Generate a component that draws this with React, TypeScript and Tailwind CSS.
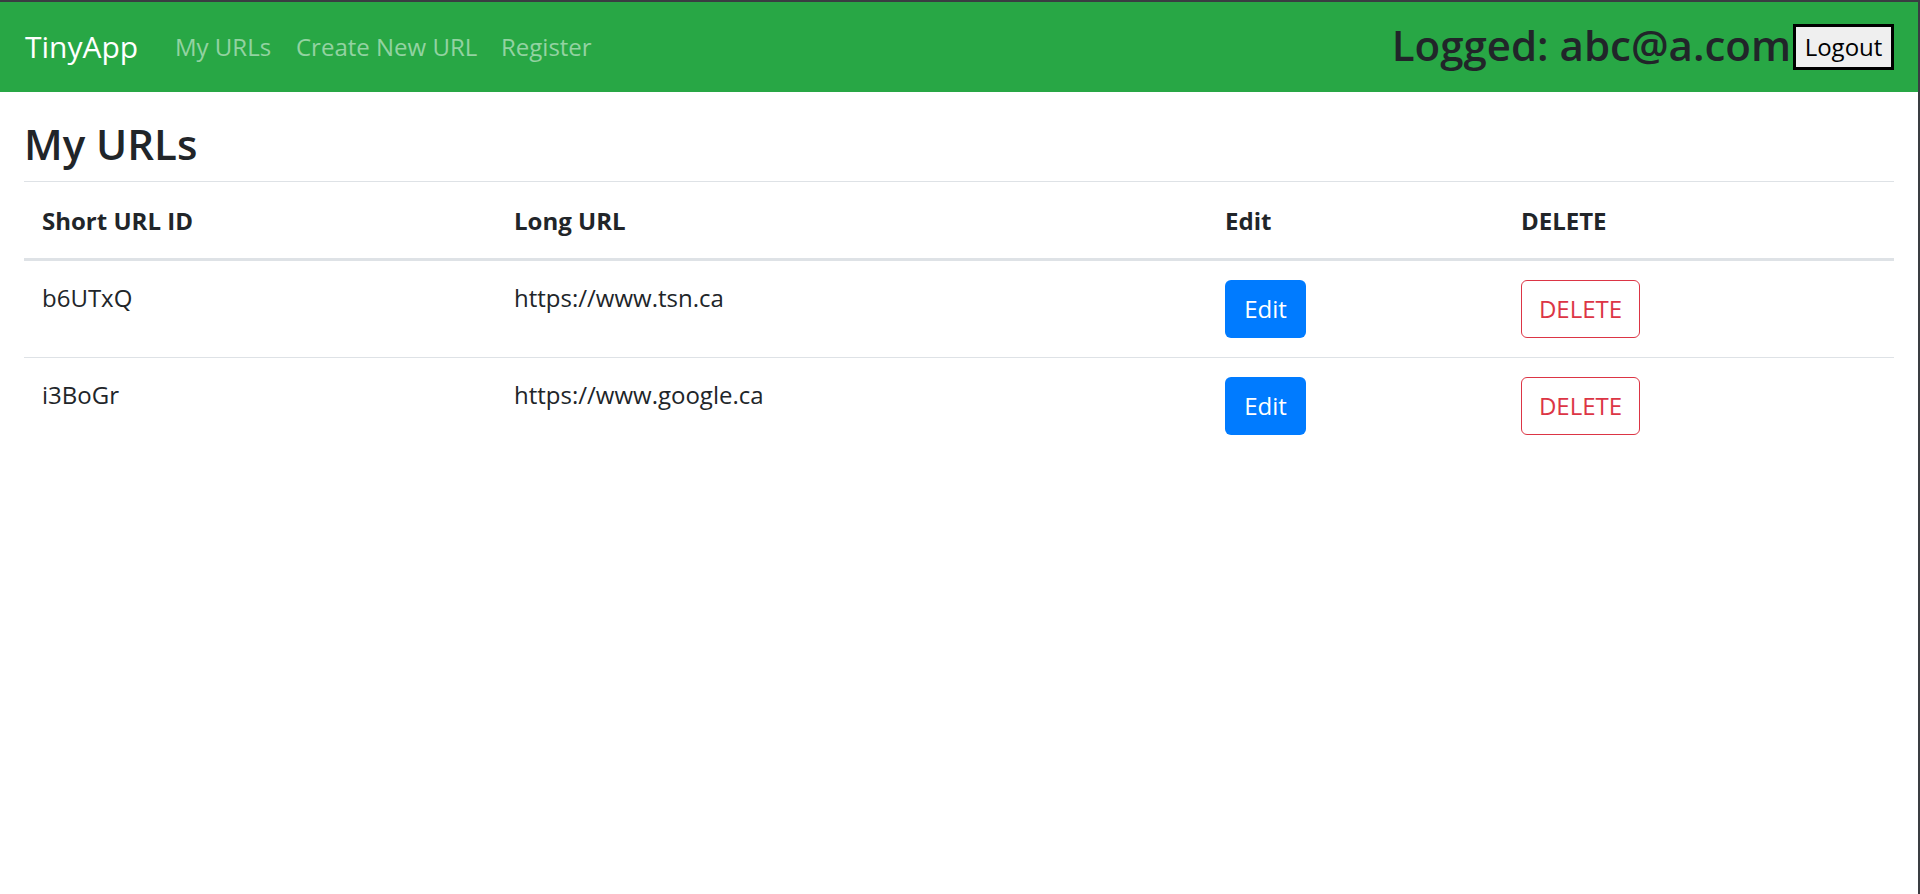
import React from "react";

type UrlRow = { id: string; longUrl: string };

const rows: UrlRow[] = [
    { id: "b6UTxQ", longUrl: "https://www.tsn.ca" },
    { id: "i3BoGr", longUrl: "https://www.google.ca" },
];

function NavBar() {
    return (
        <nav className="flex h-[90px] items-center bg-[#28a745] pl-[25px] pr-[24px]">
            <a className="w-[150px] text-[30px] leading-[46px] text-white">TinyApp</a>
            <a className="w-[121px] text-[24px] leading-[36px] text-white/50">My URLs</a>
            <a className="w-[205px] text-[24px] leading-[36px] text-white/50">Create New URL</a>
            <a className="text-[24px] leading-[36px] text-white/50">Register</a>
            <div className="ml-auto flex items-center">
                <h2 className="mb-[4px] text-[42px] font-semibold leading-[54px] text-[#212529]">
                    Logged: abc@a.com
                </h2>
                <button className="ml-[2px] h-[46px] w-[101px] border-[3px] border-black bg-[#efefef] text-[24px] leading-[36px] text-black">
                    Logout
                </button>
            </div>
        </nav>
    );
}

function UrlTable() {
    return (
        <table className="mt-[10px] w-full table-fixed border-collapse text-[24px] leading-[36px] text-[#212529]">
            <colgroup>
                <col className="w-[472px]" />
                <col className="w-[711px]" />
                <col className="w-[296px]" />
                <col />
            </colgroup>
            <thead>
                <tr className="border-t border-b-[3px] border-t-[#dee2e6] border-b-[#dee2e6]">
                    <th className="px-[18px] pt-[21px] pb-[19px] text-left font-bold">Short URL ID</th>
                    <th className="px-[18px] pt-[21px] pb-[19px] text-left font-bold">Long URL</th>
                    <th className="px-[18px] pt-[21px] pb-[19px] text-left font-bold">Edit</th>
                    <th className="px-[18px] pt-[21px] pb-[19px] text-left font-bold">DELETE</th>
                </tr>
            </thead>
            <tbody>
                {rows.map((row, i) => (
                    <tr key={row.id} className={i > 0 ? "border-t border-[#dee2e6]" : ""}>
                        <td className="px-[18px] py-[19px] align-top">{row.id}</td>
                        <td className="px-[18px] py-[19px] align-top">{row.longUrl}</td>
                        <td className="px-[18px] py-[19px] align-top">
                            <button className="flex h-[58px] w-[81px] items-center justify-center rounded-[6px] bg-[#007bff] text-white">
                                Edit
                            </button>
                        </td>
                        <td className="px-[18px] py-[19px] align-top">
                            <button className="flex h-[58px] w-[119px] items-center justify-center rounded-[6px] border border-[#dc3545] bg-white text-[#dc3545]">
                                DELETE
                            </button>
                        </td>
                    </tr>
                ))}
            </tbody>
        </table>
    );
}

export default function App() {
    return (
        <div className="min-h-[894px] border-t-2 border-r-2 border-[#3a3d42] bg-white font-['Open_Sans',sans-serif]">
            <NavBar />
            <main className="px-[24px]">
                <h1 className="mt-[25px] text-[42px] font-semibold leading-[54px] text-[#212529]">My URLs</h1>
                <UrlTable />
            </main>
        </div>
    );
}
